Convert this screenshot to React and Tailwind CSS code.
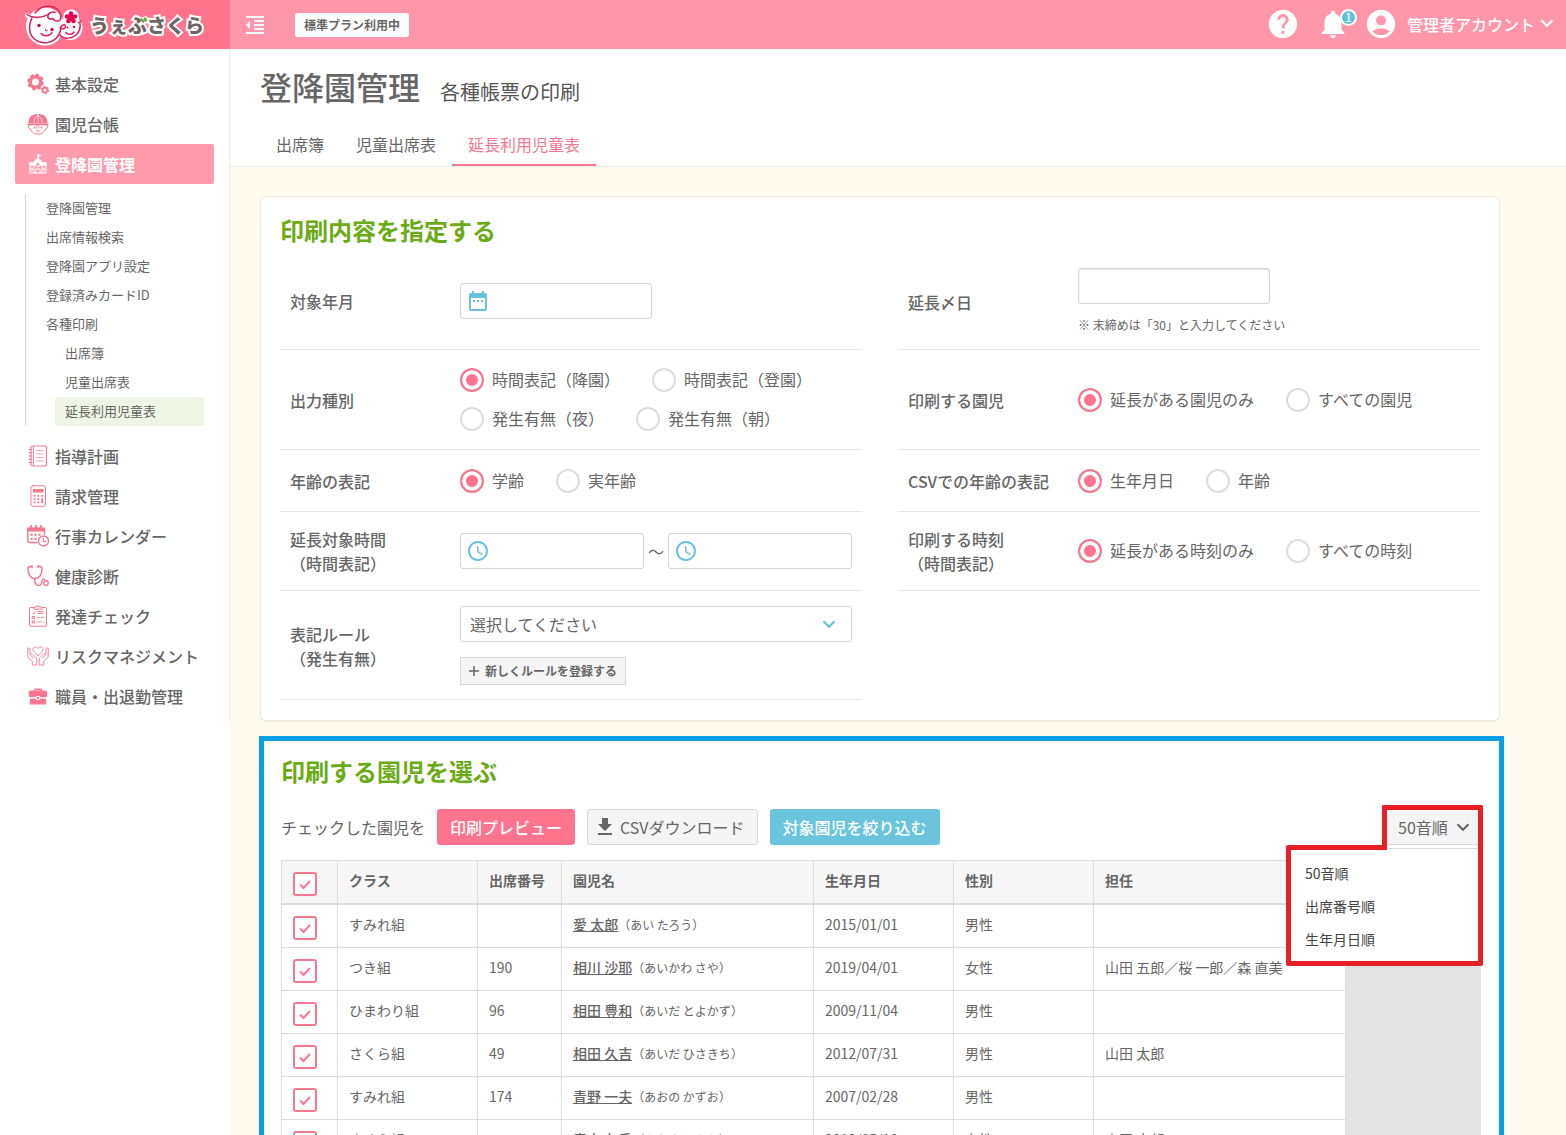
import React from "react";
import {
  MdFormatIndentDecrease,
  MdHelp,
  MdNotifications,
  MdAccountCircle,
  MdDateRange,
  MdAccessTime,
  MdFileDownload,
} from "react-icons/md";

const PINK = "#f4798f";

/* ---------- drawings ---------- */

function LogoFaces() {
  return (
    <svg viewBox="0 0 66 48" className="h-12 w-[66px] shrink-0" fill="none" strokeLinecap="round" strokeLinejoin="round">
      <g stroke="#fff" strokeWidth="4">
        <circle cx="25" cy="25.500" r="17" fill="#fff" />
        <circle cx="50.500" cy="27" r="10" fill="#fff" />
        <circle cx="51" cy="16.500" r="6" fill="#fff" />
        <path d="M7 14c3 4 7 5 11 3" />
      </g>
      <g stroke="#d6215c" strokeWidth="1.500">
        <path d="M12 17C8 25 9 34 15 38.500c7 5.500 18 4 23-3.500 2-3 3-6 2.500-9" />
        <path d="M7 13.500c6 4.500 17 3.500 23-1.500" />
        <path d="M15 12c5-7 16-9 22-4 4 3.500 5 8 3 11-2 2-6 1-7-1.500-3 1.500-6-.5-5-3 1-3 4-4 7-3" />
        <path d="M40 34c4 4.500 12 4 16.500-.500 3-3 4-7 3.500-11.500" />
        <path d="M41 26c1.500-2.500 4-3 4.500-1s-2 3.500-4 2.500" />
        <path d="M21 32.500c3 3.500 9 3 11-1" />
        <path d="M46 31.500c2 2.500 6 2.500 8-.500" />
        <path d="M25.500 28c-1 2 1 2.500 2 1.500" strokeWidth="1" />
        <path d="M58 22c1.500-.5 2.500-1.500 3-2.500" strokeWidth="1.200" />
      </g>
      <g fill="#e5004f">
        <circle cx="19" cy="24.500" r="1.700" />
        <circle cx="32" cy="28.500" r="1.700" />
        <circle cx="47.500" cy="26.500" r="1.100" />
        <circle cx="54" cy="26" r="1.200" />
        <circle cx="51" cy="12.500" r="2.300" />
        <circle cx="47" cy="15.500" r="2.300" />
        <circle cx="55" cy="15.500" r="2.300" />
        <circle cx="48.500" cy="20" r="2.300" />
        <circle cx="53.500" cy="20" r="2.300" />
        <circle cx="51" cy="16.700" r="3.200" />
      </g>
    </svg>
  );
}

function Icon({ children, color = PINK }) {
  return (
    <svg viewBox="0 0 22 22" className="size-[22px] shrink-0" fill="none" stroke={color} strokeWidth="1.2" strokeLinecap="round" strokeLinejoin="round">
      {children}
    </svg>
  );
}

const GearsIcon = () => (
  <Icon>
    <circle cx="8.500" cy="9" r="5.300" strokeWidth="3.600" />
    <circle cx="8.500" cy="9" r="7.200" strokeWidth="2.200" strokeDasharray="3.300 2.355" strokeLinecap="butt" />
    <circle cx="18" cy="17" r="2.400" strokeWidth="1.800" />
    <circle cx="18" cy="17" r="3.600" strokeWidth="1.200" strokeDasharray="1.900 1.870" strokeLinecap="butt" />
  </Icon>
);

const ChildIcon = () => (
  <Icon>
    <path d="M2 10C2 4 6 1.500 11 1.500S20 4 20 10z" fill={PINK} />
    <path d="M11 1.500V9M11 2C8 4 7 7 7 9M11 2c3 2 4 5 4 7" stroke="#fff" strokeWidth=".6" />
    <path d="M1 11.500h20" strokeWidth="1.600" />
    <path d="M3 12c-3 0-2 4 .5 4C5 20 8 21 11 21s6-1 7.500-5c2.500 0 3.500-4 .5-4" strokeWidth="1" />
    <path d="M9 17.500c1 1 3 1 4 0" strokeWidth="1" />
    <circle cx="7.500" cy="14.500" r=".9" fill={PINK} stroke="none" />
    <circle cx="14.500" cy="14.500" r=".9" fill={PINK} stroke="none" />
    <path d="M10 12.500h2v2.500h-2z" strokeWidth=".6" />
  </Icon>
);

const SchoolIcon = () => (
  <Icon color="#fff">
    <path d="M11 7V1.500" />
    <path d="M11 1.500l2.500 1-2.500 1z" fill="#fff" />
    <path d="M7.500 8.500L11 5.500l3.500 3v3h-7z" fill="#fff" />
    <path d="M2.500 9.500h17v3h-17z" fill="#fff" strokeWidth=".6" />
    <path d="M3 13v7h16v-7" strokeWidth="1" />
    <path d="M9 20v-4h4v4M7 13v7M15 13v7" strokeWidth="1" />
    <circle cx="11" cy="11.500" r="2.200" fill="#ff9bad" strokeWidth="1" />
    <path d="M4.500 15h1v2.500h-1zM16.500 15h1v2.500h-1z" strokeWidth=".8" />
  </Icon>
);

const NotebookIcon = () => (
  <Icon>
    <rect x="4" y="1" width="15.500" height="20" rx="1.500" />
    <path d="M6.500 1v20" strokeWidth=".8" />
    <path d="M9.500 5.500h7M9.500 9h7M9.500 12.500h7M9.500 16h7" strokeWidth=".7" />
    <path d="M2 4.500h3M2 7.700h3M2 11h3M2 14.200h3M2 17.500h3" strokeWidth="1.200" />
  </Icon>
);

const CalculatorIcon = () => (
  <Icon>
    <rect x="4" y=".8" width="14.500" height="20.500" rx="2" strokeWidth="1" />
    <path d="M6 4h10.500v3.500H6z" fill={PINK} stroke="none" />
    <path
      d="M6.500 10h2v1.700h-2zM10.300 10h2v1.700h-2zM14.200 10h2v1.700h-2zM6.500 13.200h2v1.700h-2zM10.300 13.200h2v1.700h-2zM14.200 13.200h2v5h-2zM6.500 16.500h2v1.700h-2zM10.300 16.500h2v1.700h-2z"
      fill={PINK}
      stroke="none"
    />
  </Icon>
);

const CalendarClockIcon = () => (
  <Icon>
    <path d="M10 17.500H2.500c-1 0-1.700-.7-1.700-1.700V3.500H17.500V9" strokeWidth="1.400" />
    <path d="M1 3h16.500v3H1z" fill={PINK} />
    <path d="M4 .8V3M9 .8V3M14 .8V3" strokeWidth="1.800" />
    <path d="M3.500 8.800h2.200v2H3.500zM7.400 8.800h2.200v2H7.400zM11.300 8.800h2.200v2h-2.200zM3.500 12.700h2.200v2H3.500zM7.400 12.700h2.200v2H7.400z" fill={PINK} stroke="none" />
    <circle cx="16.500" cy="16" r="5" fill="#fff" strokeWidth="1.300" />
    <path d="M16.300 13v3.300h2.500" />
  </Icon>
);

const StethoscopeIcon = () => (
  <Icon>
    <path d="M4.500 1.500H3C1.500 1.500 1 2.500 1 4c0 5 2.500 9.500 7 9.500S15 9 15 4c0-1.500-.5-2.500-2-2.500h-1.500" strokeWidth="1.500" />
    <path d="M8 13.500c0 1.500-1 1.500 0 4 1.500 4 6.500 4.500 7-1.500.2-2 1.500-2.500 2.500-1.500l.5 1" strokeWidth="1.500" />
    <path d="M5 .8v1.600M11 .8v1.600" strokeWidth="1.600" />
    <circle cx="19" cy="18" r="2.200" strokeWidth="1.400" />
  </Icon>
);

const ClipboardIcon = () => (
  <Icon>
    <rect x="2.500" y="2.500" width="17" height="18.700" rx="1" strokeWidth="1" />
    <path d="M7 3.800V2h2.500c0-1.600 3-1.600 3 0H15v1.800z" fill="#fff" strokeWidth="1" />
    <path d="M5.500 8l1 1 1.800-2.500M11 8.300h5" strokeWidth="1" />
    <path d="M5.500 11.500h2v2h-2zM5.500 16h2v2h-2z" strokeWidth="1" />
    <path d="M10.500 12.500h2M14.500 12.500h2.500M10.500 17h4M16.500 17h.5M11 6.500h5" strokeWidth=".9" />
  </Icon>
);

const HandsHeartIcon = () => (
  <Icon>
    <path d="M11 10.500C7 7.500 6 6 6 4.200c0-2.500 3.700-3.200 5-.7 1.300-2.500 5-1.800 5 .7 0 1.800-1 3.300-5 6.300z" strokeWidth=".9" />
    <path d="M.8 3.500v8.500l4.500 4.500v3.500h4.500v-5c0-2-1.500-3-3-4.500l-1.500-1.500c-1-1-2.200 0-1.500 1.200l2.200 2.800M.8 3.500c.8-1 2.200-.7 2.200.7v5" strokeWidth=".9" />
    <path d="M21.200 3.500v8.500l-4.500 4.500v3.500h-4.500v-5c0-2 1.500-3 3-4.500l1.500-1.500c1-1 2.200 0 1.500 1.200l-2.200 2.800M21.200 3.500c-.8-1-2.200-.7-2.200.7v5" strokeWidth=".9" />
  </Icon>
);

const BriefcaseIcon = () => (
  <Icon color="#ff738c">
    <path d="M8 6V4.200h6V6" strokeWidth="1.600" />
    <rect x="2.500" y="6.200" width="17" height="5.500" rx="1" fill="#ff738c" />
    <path d="M3.500 14h15v4.800h-15z" fill="#ff738c" />
    <path d="M1.500 12.900h19" stroke="#fff" strokeWidth="1" />
    <path d="M9.500 11.500h3v3h-3z" fill="#ff738c" stroke="#fff" strokeWidth="1" />
  </Icon>
);

function Chevron({ className }) {
  return (
    <svg viewBox="0 0 14 9" className={className} fill="none" stroke="currentColor" strokeWidth="2.200">
      <path d="M1.500 1.300L7 6.800l5.500-5.500" />
    </svg>
  );
}

/* ---------- form parts ---------- */

function Radio({ name, label, checked }) {
  return (
    <label className="flex items-center gap-2">
      <input
        type="radio"
        name={name}
        defaultChecked={checked}
        className="size-6 shrink-0 appearance-none rounded-full border-2 border-[#dddddd] bg-white checked:border-[#f4798f] checked:bg-[#ff738c] checked:shadow-[inset_0_0_0_4px_white]"
      />
      <span className="pb-0.5 leading-[22px]">{label}</span>
    </label>
  );
}

function Row({ label, htmlFor, className, children }) {
  const Tag = htmlFor ? "label" : "span";
  return (
    <div className={"flex items-center border-b border-[#e6e6e6] px-2.5 " + className}>
      <Tag htmlFor={htmlFor} className="w-[170px] shrink-0 leading-6 font-medium whitespace-pre-line">
        {label}
      </Tag>
      <div className="min-w-0 flex-1">{children}</div>
    </div>
  );
}

const inputClass = "h-9 rounded-[3px] border border-[#d5d5d5] bg-white text-base outline-none";

function TimeInput({ label }) {
  return (
    <div className="relative flex-1">
      <MdAccessTime className="absolute top-1.5 left-1.5 size-6 text-[#6bc1dc]" />
      <input type="text" aria-label={label} className={inputClass + " w-full pr-2 pl-9"} />
    </div>
  );
}

function Check({ label }) {
  return (
    <label className="relative mt-1 block size-6">
      <input
        type="checkbox"
        aria-label={label}
        defaultChecked
        className="block size-6 appearance-none rounded-[3px] border-2 border-[#f4798f] bg-white"
      />
      <svg viewBox="0 0 24 24" className="pointer-events-none absolute inset-0 size-6" fill="none" stroke="#f4798f" strokeWidth="2">
        <path d="M7 12.500l3.500 3.500 6.500-7" />
      </svg>
    </label>
  );
}

/* ---------- data ---------- */

const subLinks = [
  { text: "登降園管理" },
  { text: "出席情報検索" },
  { text: "登降園アプリ設定" },
  { text: "登録済みカードID" },
  { text: "各種印刷" },
  { text: "出席簿", nested: true },
  { text: "児童出席表", nested: true },
  { text: "延長利用児童表", nested: true, active: true },
];

const lowerLinks = [
  [NotebookIcon, "指導計画"],
  [CalculatorIcon, "請求管理"],
  [CalendarClockIcon, "行事カレンダー"],
  [StethoscopeIcon, "健康診断"],
  [ClipboardIcon, "発達チェック"],
  [HandsHeartIcon, "リスクマネジメント"],
  [BriefcaseIcon, "職員・出退勤管理"],
];

const children = [
  ["すみれ組", "", "愛 太郎", "あい たろう", "2015/01/01", "男性", ""],
  ["つき組", "190", "相川 沙耶", "あいかわ さや", "2019/04/01", "女性", "山田 五郎／桜 一郎／森 直美"],
  ["ひまわり組", "96", "相田 豊和", "あいだ とよかず", "2009/11/04", "男性", ""],
  ["さくら組", "49", "相田 久吉", "あいだ ひさきち", "2012/07/31", "男性", "山田 太郎"],
  ["すみれ組", "174", "青野 一夫", "あおの かずお", "2007/02/28", "男性", ""],
  ["さくら組", "", "青木 友香", "あおき ともか", "2012/05/10", "女性", "山田 太郎"],
];

/* ---------- page regions ---------- */

function Header() {
  return (
    <header className="flex h-[49px] shrink-0 bg-[#ff96a9] text-white">
      <a href="#" className="flex w-[230px] shrink-0 items-center bg-[#ff738c] pl-5" aria-label="うぇぶさくら">
        <LogoFaces />
        <span className="relative pl-1 text-[19px] leading-6 font-black text-[#6f6463] [-webkit-text-stroke:4px_white] [paint-order:stroke_fill]">
          うぇぶさくら
          <svg viewBox="0 0 8 6" className="absolute top-1 left-[54px] h-1.5 w-2" stroke="#7ab51d" strokeWidth="1.800" strokeLinecap="round">
            <path d="M1.500 2l1 2M5 1l1 2" />
          </svg>
        </span>
      </a>
      <div className="flex flex-1 items-center pr-3 pl-[13px]">
        <button type="button" aria-label="メニューを閉じる">
          <MdFormatIndentDecrease className="size-6" />
        </button>
        <span className="ml-7 rounded-[3px] bg-white px-[9px] text-xs leading-6 font-bold text-[#666666]">標準プラン利用中</span>
        <div className="ml-auto flex items-center pb-0.5">
          <button type="button" aria-label="ヘルプ">
            <MdHelp className="size-[34px]" />
          </button>
          <button type="button" aria-label="お知らせ 1件" className="relative ml-4">
            <MdNotifications className="size-[34px]" />
            <span className="absolute top-0.5 right-[-7px] flex size-[17px] items-center justify-center rounded-full border-2 border-white bg-[#5fc2dc] text-[11px] leading-none font-medium">
              1
            </span>
          </button>
          <button type="button" className="ml-[14px] flex items-center">
            <MdAccountCircle className="size-[34px]" />
            <span className="ml-[9px] leading-6 font-medium">管理者アカウント</span>
            <Chevron className="ml-[5px] h-[9px] w-3.5" />
          </button>
        </div>
      </div>
    </header>
  );
}

function NavLink({ icon: I, text, active }) {
  return (
    <a
      href="#"
      className={
        "flex h-10 items-center gap-1.5 rounded-[2px] pl-3 " + (active ? "bg-[#ff9bad] font-bold text-white" : "font-medium")
      }
    >
      <I />
      <span>{text}</span>
    </a>
  );
}

function Sidebar() {
  return (
    <aside className="w-[230px] shrink-0 bg-white">
      <nav className="border-r border-[#ebebeb] pt-[15px] pr-[15px] pb-1.5 pl-[15px]">
        <NavLink icon={GearsIcon} text="基本設定" />
        <NavLink icon={ChildIcon} text="園児台帳" />
        <NavLink icon={SchoolIcon} text="登降園管理" active />
        <ul className="mx-2.5 my-2.5 border-l border-[#d5d5d5] text-[13px] leading-[27px]">
          {subLinks.map((l) => (
            <li key={l.text} className={l.nested ? "pl-[29px]" : "pl-5"}>
              <a
                href="#"
                className={
                  "block pb-0.5 " + (l.nested ? "rounded-[2px] pl-2.5 " : "") + (l.active ? "bg-[#eff6e5]" : "")
                }
              >
                {l.text}
              </a>
            </li>
          ))}
        </ul>
        {lowerLinks.map(([I, text]) => (
          <NavLink key={text} icon={I} text={text} />
        ))}
      </nav>
    </aside>
  );
}

function PageHead() {
  return (
    <div className="border-b border-[#ebebeb] bg-white px-[30px]">
      <div className="flex items-baseline gap-5 pt-3.5">
        <h1 className="text-[32px] leading-[46px] font-medium">登降園管理</h1>
        <h2 className="text-xl leading-8 text-[#555555]">各種帳票の印刷</h2>
      </div>
      <nav className="mt-[15px] flex">
        <a href="#" className="border-b-2 border-transparent px-4 leading-[40px]">出席簿</a>
        <a href="#" className="border-b-2 border-transparent px-4 leading-[40px]">児童出席表</a>
        <a href="#" className="border-b-2 border-[#f4798f] px-4 leading-[40px] text-[#f4798f]">延長利用児童表</a>
      </nav>
    </div>
  );
}

function SettingsCard() {
  return (
    <section className="rounded-md border border-[#ebe8e0] bg-white px-[19px] pb-5 shadow-xs">
      <h3 className="pt-[15px] pb-1.5 text-2xl leading-9 font-bold text-[#6aab16]">印刷内容を指定する</h3>
      <div className="grid grid-cols-2 gap-x-9">
        <Row label="対象年月" htmlFor="month" className="pt-3 pb-3.5">
          <div className="relative w-48">
            <MdDateRange className="absolute top-1.5 left-1.5 size-6 text-[#6bc1dc]" />
            <input id="month" type="text" className={inputClass + " block w-full pr-2 pl-9"} />
          </div>
        </Row>
        <Row label="延長〆日" htmlFor="closing" className="py-3.5">
          <input id="closing" type="text" className={inputClass + " block w-48 px-2 shadow-[inset_0_1px_2px_#e0e0e0]"} />
          <p className="mt-[11px] text-xs leading-5">※ 末締めは「30」と入力してください</p>
        </Row>

        <Row label="出力種別" className="py-[18px]">
          <div className="flex flex-wrap gap-x-8 gap-y-[15px]">
            <Radio name="kind" label="時間表記（降園）" checked />
            <Radio name="kind" label="時間表記（登園）" />
            <Radio name="kind" label="発生有無（夜）" />
            <Radio name="kind" label="発生有無（朝）" />
          </div>
        </Row>
        <Row label="印刷する園児" className="py-[18px]">
          <div className="flex flex-wrap gap-x-8 gap-y-[15px]">
            <Radio name="target" label="延長がある園児のみ" checked />
            <Radio name="target" label="すべての園児" />
          </div>
        </Row>

        <Row label="年齢の表記" className="min-h-[62px]">
          <div className="flex flex-wrap gap-x-8">
            <Radio name="age" label="学齢" checked />
            <Radio name="age" label="実年齢" />
          </div>
        </Row>
        <Row label="CSVでの年齢の表記" className="min-h-[62px]">
          <div className="flex flex-wrap gap-x-8">
            <Radio name="csvage" label="生年月日" checked />
            <Radio name="csvage" label="年齢" />
          </div>
        </Row>

        <Row label={"延長対象時間\n（時間表記）"} className="py-[15px]">
          <div className="flex items-center">
            <TimeInput label="延長対象時間 開始" />
            <span className="w-6 text-center">～</span>
            <TimeInput label="延長対象時間 終了" />
          </div>
        </Row>
        <Row label={"印刷する時刻\n（時間表記）"} className="py-[15px]">
          <div className="flex flex-wrap gap-x-8">
            <Radio name="time" label="延長がある時刻のみ" checked />
            <Radio name="time" label="すべての時刻" />
          </div>
        </Row>

        <Row label={"表記ルール\n（発生有無）"} htmlFor="rule" className="pt-[15px] pb-3.5">
          <div className="relative">
            <select id="rule" className={inputClass + " block w-full appearance-none px-[9px]"}>
              <option>選択してください</option>
            </select>
            <Chevron className="pointer-events-none absolute top-3.5 right-4 h-[9px] w-3.5 text-[#6bc1dc]" />
          </div>
          <button
            type="button"
            className="mt-[15px] flex h-7 items-center gap-1.5 border border-[#d8d8d8] bg-[#f5f5f5] px-2 text-xs font-bold"
          >
            <svg viewBox="0 0 10 10" className="size-2.5" stroke="currentColor" strokeWidth="1.500">
              <path d="M5 0v10M0 5h10" />
            </svg>
            新しくルールを登録する
          </button>
        </Row>
      </div>
    </section>
  );
}

function SortControl() {
  return (
    <div className="relative ml-auto h-9 w-[94px]">
      <ul className="absolute top-9 -right-0.5 w-[197px] rounded-[2px] border-5 border-[#e81f27] bg-white px-3.5 pt-[7px] pb-[5px] text-sm leading-[33px] text-[#444444]">
        <li><button type="button">50音順</button></li>
        <li><button type="button">出席番号順</button></li>
        <li><button type="button">生年月日順</button></li>
      </ul>
      <div className="absolute -top-1 -right-0.5 -left-[5px] h-[45px] rounded-t-[2px] border-5 border-b-0 border-[#e81f27] bg-white">
        <button type="button" className="flex h-[35px] w-full items-center gap-2 border-b border-[#d8d8d8] bg-[#f5f5f5] pl-[11px]">
          50音順
          <Chevron className="h-[9px] w-3.5" />
        </button>
        <div className="h-1 border-b border-[#dddddd]" />
      </div>
    </div>
  );
}

const columns = [
  ["クラス", "w-[140px]"],
  ["出席番号", "w-[84px]"],
  ["園児名", "w-[252px]"],
  ["生年月日", "w-[140px]"],
  ["性別", "w-[140px]"],
  ["担任", "w-[252px]"],
];

function ChildrenCard() {
  const cell = "border-r border-b border-[#dddddd] pr-2 pb-1 pl-[11px] text-left";
  return (
    <section className="mt-[15px] -mr-1 -ml-px border-5 border-[#0aa0e6] bg-white pr-[18px] pb-5 pl-[17px]">
      <h3 className="pt-3 pb-5 text-2xl leading-9 font-bold text-[#6aab16]">印刷する園児を選ぶ</h3>
      <div className="flex h-9 items-center gap-3">
        <span>チェックした園児を</span>
        <button type="button" className="h-9 rounded-[3px] bg-[#ff738c] px-[13px] font-medium text-white">
          印刷プレビュー
        </button>
        <button type="button" className="flex h-9 items-center rounded-[3px] border border-[#d8d8d8] bg-[#f5f5f5] pr-3 pl-[5px]">
          <MdFileDownload className="mr-[3px] size-6" />
          CSVダウンロード
        </button>
        <button type="button" className="h-9 rounded-[3px] bg-[#6ac4de] px-[13px] font-medium text-white">
          対象園児を絞り込む
        </button>
        <SortControl />
      </div>
      <div className="mt-[15px] bg-[#e3e3e3]">
        <table className="w-[1065px] table-fixed border-separate border-spacing-0 border-t border-l border-[#dddddd] bg-white text-sm leading-5">
          <thead>
            <tr className="h-11 bg-[#f7f7f7]">
              <th className="w-14 border-r border-b-2 border-[#dddddd] pl-[11px]">
                <Check label="すべて選択" />
              </th>
              {columns.map(([title, width]) => (
                <th key={title} className={"border-r border-b-2 border-[#dddddd] pr-2 pb-1 pl-[11px] text-left font-bold " + width}>
                  {title}
                </th>
              ))}
            </tr>
          </thead>
          <tbody>
            {children.map(([group, no, name, kana, birth, sex, teacher]) => (
              <tr key={name} className="h-[43px]">
                <td className="border-r border-b border-[#dddddd] pl-[11px]">
                  <Check label={name} />
                </td>
                <td className={cell}>{group}</td>
                <td className={cell}>{no}</td>
                <td className={cell}>
                  <a href="#" className="font-medium underline">{name}</a>
                  <span className="text-xs">（{kana}）</span>
                </td>
                <td className={cell}>{birth}</td>
                <td className={cell}>{sex}</td>
                <td className={cell + " whitespace-nowrap"}>{teacher}</td>
              </tr>
            ))}
          </tbody>
        </table>
      </div>
    </section>
  );
}

export default function App() {
  return (
    <div
      lang="ja"
      className="flex h-screen flex-col overflow-hidden bg-[#fffaee] font-['Noto_Sans_CJK_JP',sans-serif] text-base text-[#666666]"
    >
      <Header />
      <div className="flex min-h-0 flex-1">
        <Sidebar />
        <main className="min-w-0 flex-1">
          <PageHead />
          <div className="pt-[29px] pr-[66px] pl-[30px]">
            <SettingsCard />
            <ChildrenCard />
          </div>
        </main>
      </div>
    </div>
  );
}
